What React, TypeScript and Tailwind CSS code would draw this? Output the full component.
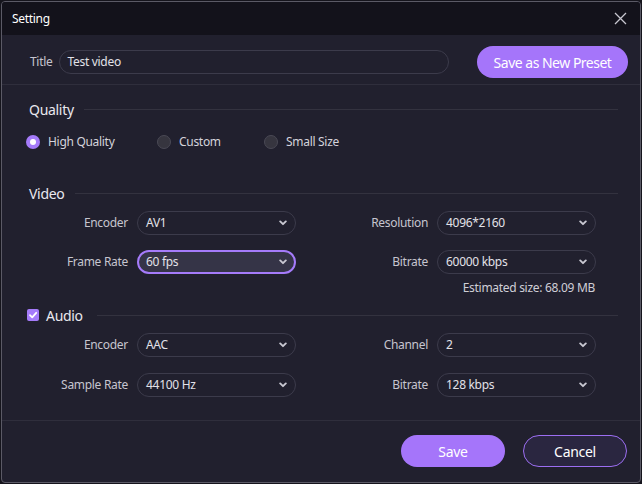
import React from 'react';

const font = { fontFamily: '"Noto Sans", "Open Sans", sans-serif' };

function Chevron() {
  return (
    <svg width="8" height="6" viewBox="0 0 8 6" className="shrink-0">
      <path d="M1.2 1.4 L4 4.2 L6.8 1.4" fill="none" stroke="#c9c8d2" strokeWidth="1.9" strokeLinecap="round" strokeLinejoin="round" />
    </svg>
  );
}

function Select({ value, active = false }: { value: string; active?: boolean }) {
  return (
    <div
      className={
        active
          ? 'w-[159px] h-[24px] rounded-full border-2 border-[#a57bfa] bg-[#353447] flex items-center justify-between pl-[7px] pr-[7px]'
          : 'w-[159px] h-[24px] rounded-full border border-[#3c3b4b] flex items-center justify-between pl-[8px] pr-[8px]'
      }
    >
      <span className="text-[12px] tracking-[-0.3px] text-[#e2e1e8]">{value}</span>
      <Chevron />
    </div>
  );
}

function Row({ l1, v1, l2, v2, active = false }: { l1: string; v1: string; l2: string; v2: string; active?: boolean }) {
  return (
    <div className="flex items-center h-[24px]">
      <span className="w-[126px] text-right text-[12px] tracking-[-0.3px] text-[#c6c5cf]">{l1}</span>
      <div className="ml-[9px]">
        <Select value={v1} active={active} />
      </div>
      <span className="w-[132px] text-right text-[12px] tracking-[-0.3px] text-[#c6c5cf]">{l2}</span>
      <div className="ml-[9px]">
        <Select value={v2} />
      </div>
    </div>
  );
}

function Heading({ children }: { children: React.ReactNode }) {
  return (
    <div className="flex items-center h-[20px] pl-[27px] pr-[22px]">
      <span className="text-[14px] tracking-[-0.3px] text-[#e9e8ef]">{children}</span>
      <div className="flex-1 h-px bg-[#33323f] ml-[10px]" />
    </div>
  );
}

function Radio({ label, checked = false }: { label: string; checked?: boolean }) {
  return (
    <div className="flex items-center gap-[8px]">
      {checked ? (
        <div className="w-[14px] h-[14px] rounded-full bg-[#a57bfa] flex items-center justify-center">
          <div className="w-[6px] h-[6px] rounded-full bg-white" />
        </div>
      ) : (
        <div className="w-[14px] h-[14px] rounded-full bg-[#36353f] border border-[#4a4955]" />
      )}
      <span className="text-[12px] tracking-[-0.3px] text-[#d4d3db]">{label}</span>
    </div>
  );
}

export default function App() {
  return (
    <div className="w-[642px] h-[484px] bg-[#15141c] pl-[1px] pt-[1px]" style={font}>
      <div className="w-[640px] h-[482px] border border-[#5b5a66] rounded-[4px] bg-[#21202e] flex flex-col overflow-hidden">
        <div className="h-[33px] bg-[#13121b] flex items-center justify-between pl-[10px] pr-[13px] shrink-0">
          <span className="text-[12px] tracking-[-0.3px] text-white">Setting</span>
          <svg width="13" height="13" viewBox="0 0 13 13">
            <path d="M1 1 L12 12 M12 1 L1 12" stroke="#c8c7d0" strokeWidth="1.3" />
          </svg>
        </div>

        <div className="flex items-center h-[32px] mt-[11px] pl-[28px] pr-[12px]">
          <span className="text-[12px] tracking-[-0.3px] text-[#c6c5cf]">Title</span>
          <div className="ml-[7px] w-[390px] h-[24px] rounded-full border border-[#3c3b4b] flex items-center pl-[7px]">
            <span className="text-[12px] tracking-[-0.3px] text-[#e2e1e8]">Test video</span>
          </div>
          <button className="ml-auto w-[151px] h-[32px] rounded-full bg-[#a575fa] text-[14px] tracking-[-0.5px] text-white">
            Save as New Preset
          </button>
        </div>
        <div className="h-px bg-[#2f2e3c] mt-[6px]" />

        <div className="mt-[14px]">
          <Heading>Quality</Heading>
        </div>
        <div className="flex items-center h-[20px] mt-[13px] pl-[24px]">
          <div className="w-[131px]">
            <Radio label="High Quality" checked />
          </div>
          <div className="w-[107px]">
            <Radio label="Custom" />
          </div>
          <Radio label="Small Size" />
        </div>

        <div className="mt-[31px]">
          <Heading>Video</Heading>
        </div>
        <div className="mt-[8px]">
          <Row l1="Encoder" v1="AV1" l2="Resolution" v2="4096*2160" />
        </div>
        <div className="mt-[15px]">
          <Row l1="Frame Rate" v1="60 fps" l2="Bitrate" v2="60000 kbps" active />
        </div>
        <div className="mt-[6px] h-[16px] flex items-center justify-end pr-[45px]">
          <span className="text-[12px] tracking-[-0.3px] text-[#cfced7]">Estimated size: 68.09 MB</span>
        </div>

        <div className="mt-[9px] flex items-center h-[20px] pl-[25px] pr-[22px]">
          <div className="w-[12px] h-[12px] rounded-[2px] bg-[#a57bfa] flex items-center justify-center">
            <svg width="10" height="10" viewBox="0 0 10 10">
              <path d="M2 5.2 L4.2 7.3 L8.2 2.8" fill="none" stroke="white" strokeWidth="1.8" strokeLinecap="round" strokeLinejoin="round" />
            </svg>
          </div>
          <span className="ml-[7px] text-[14px] tracking-[-0.3px] text-[#e9e8ef]">Audio</span>
          <div className="flex-1 h-px bg-[#33323f] ml-[14px]" />
        </div>
        <div className="mt-[8px]">
          <Row l1="Encoder" v1="AAC" l2="Channel" v2="2" />
        </div>
        <div className="mt-[16px]">
          <Row l1="Sample Rate" v1="44100 Hz" l2="Bitrate" v2="128 kbps" />
        </div>

        <div className="h-px bg-[#2f2e3c] mt-[23px]" />
        <div className="flex items-center justify-end gap-[18px] mt-[14px] pr-[13px]">
          <button className="w-[104px] h-[32px] rounded-full bg-[#a575fa] text-[14px] tracking-[-0.3px] text-white">Save</button>
          <button className="w-[104px] h-[32px] rounded-full border border-[#9c6ef2] bg-[#2a2640] text-[14px] tracking-[-0.3px] text-white">
            Cancel
          </button>
        </div>
      </div>
    </div>
  );
}
